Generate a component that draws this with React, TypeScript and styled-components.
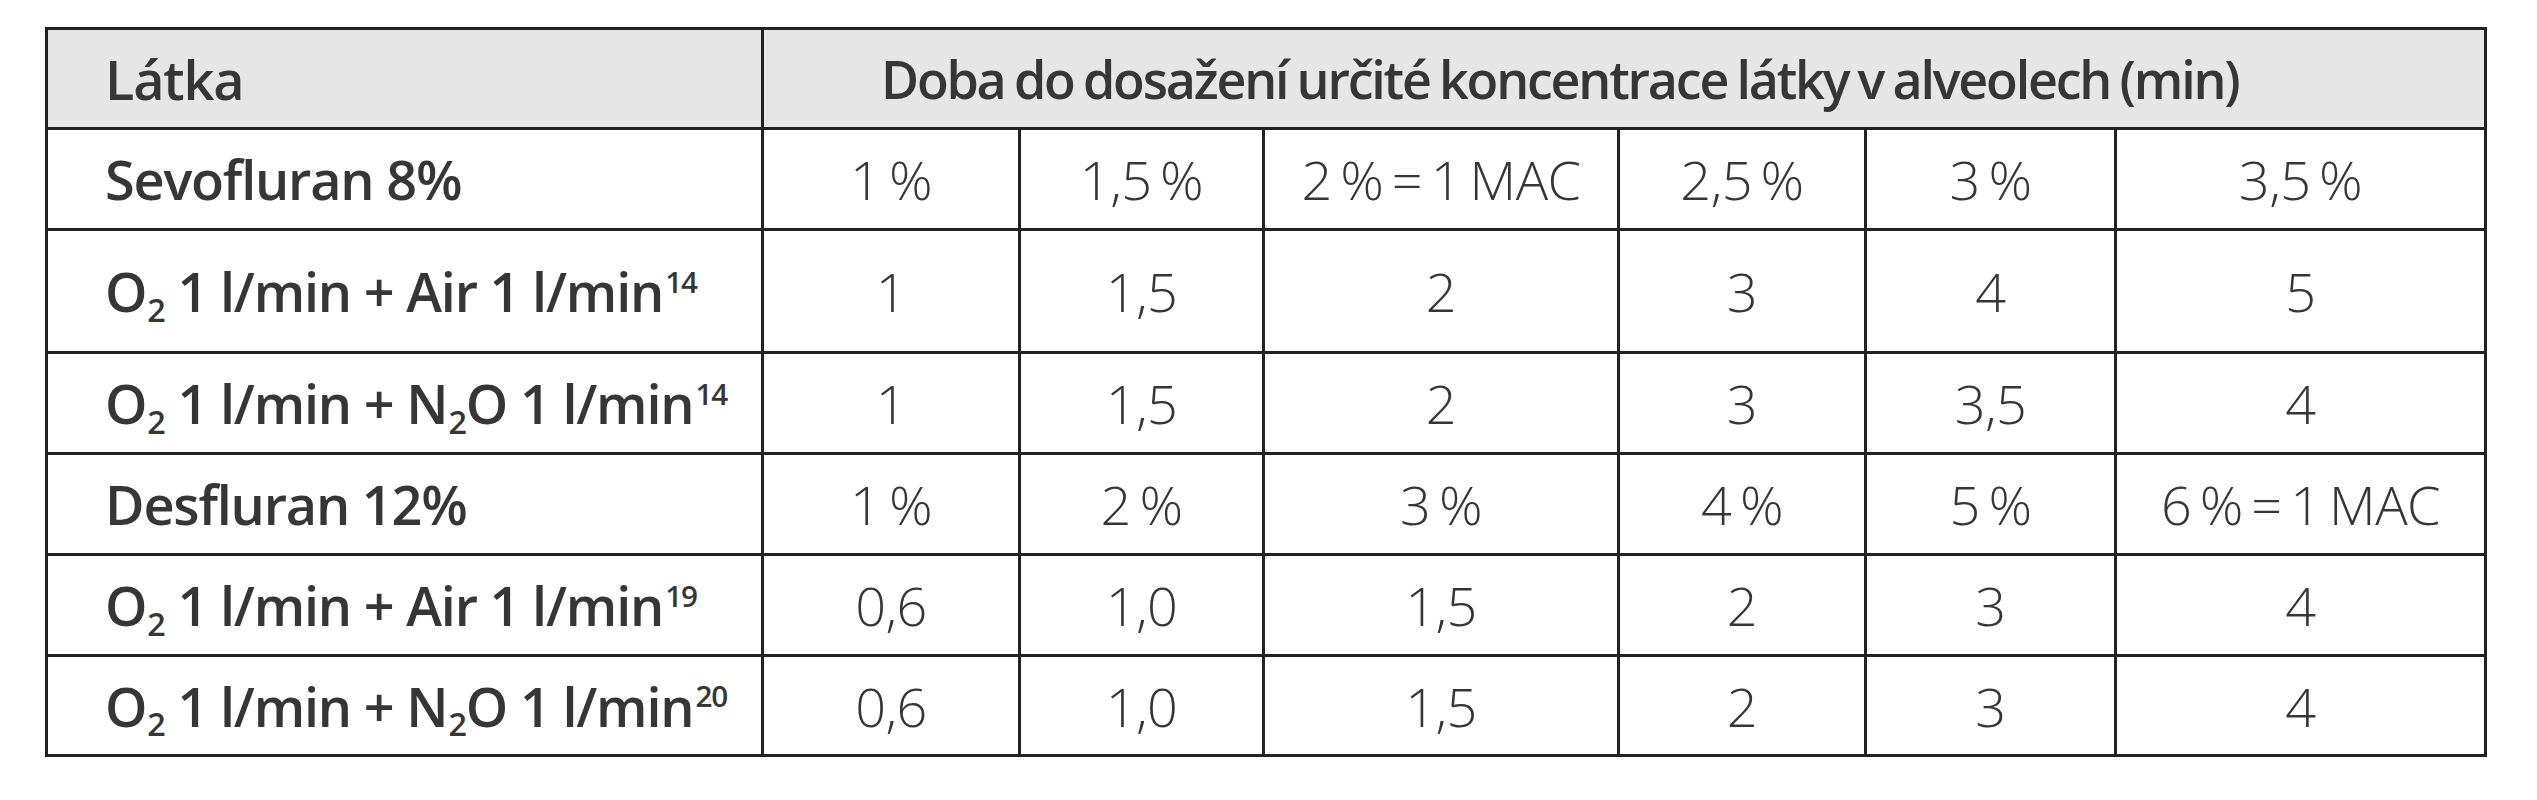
import styled, { createGlobalStyle } from 'styled-components';
import { Fragment, ReactNode } from 'react';

const GlobalStyle = createGlobalStyle`
  body {
    margin: 0;
    background: #fff;
    font-family: "Open Sans", "Noto Sans", sans-serif;
    color: #363636;
  }
`;

const StyledPage = styled.div`
  padding: 27px 0 0 45px;
`;

const StyledTable = styled.div`
  display: grid;
  grid-template-columns: 713px 254px 241px 352px 244px 247px 367px;
  gap: 3px;
  padding: 3px;
  width: max-content;
  background-color: #222;
`;

const StyledCell = styled.div<{ $height: number; $head?: boolean; $span?: number; $label?: boolean }>`
  display: flex;
  align-items: center;
  justify-content: ${(p) => (p.$label ? 'flex-start' : 'center')};
  height: ${(p) => p.$height}px;
  padding: ${(p) => (p.$label ? '0 0 0 57px' : '0')};
  grid-column: span ${(p) => p.$span ?? 1};
  background-color: ${(p) => (p.$head ? '#e6e6e6' : '#fff')};

  font-size: 54px;
  font-weight: ${(p) => (p.$label || p.$head ? 650 : 300)};
  letter-spacing: ${(p) => (p.$label ? '-1.2px' : '-0.5px')};
  word-spacing: ${(p) => (p.$label ? '0' : '-5px')};
  white-space: nowrap;
`;

const StyledHeadTitle = styled(StyledCell)`
  justify-content: flex-start;
  padding-left: 117px;
  font-size: 52px;
  letter-spacing: -2.2px;
  word-spacing: -2px;
`;

const StyledText = styled.span`
  display: inline-block;
`;

const StyledSub = styled.sub`
  font-size: 0.6em;
  line-height: 0;
  vertical-align: -0.3em;
  margin-left: 1px;
`;

const StyledSup = styled.sup`
  font-size: 0.55em;
  line-height: 0;
  vertical-align: 0.65em;
  margin-left: 2px;
`;

interface Row {
  label: ReactNode;
  values: string[];
  height: number;
}

function Oxygen() {
  return <>O<StyledSub>2</StyledSub>{' 1 l/min'}</>;
}

const rows: Row[] = [
  {
    label: 'Sevofluran 8%',
    values: ['1 %', '1,5 %', '2 % = 1 MAC', '2,5 %', '3 %', '3,5 %'],
    height: 98,
  },
  {
    label: <><Oxygen /> + Air 1 l/min<StyledSup>14</StyledSup></>,
    values: ['1', '1,5', '2', '3', '4', '5'],
    height: 120,
  },
  {
    label: <><Oxygen /> + N<StyledSub>2</StyledSub>O 1 l/min<StyledSup>14</StyledSup></>,
    values: ['1', '1,5', '2', '3', '3,5', '4'],
    height: 98,
  },
  {
    label: 'Desfluran 12%',
    values: ['1 %', '2 %', '3 %', '4 %', '5 %', '6 % = 1 MAC'],
    height: 98,
  },
  {
    label: <><Oxygen /> + Air 1 l/min<StyledSup>19</StyledSup></>,
    values: ['0,6', '1,0', '1,5', '2', '3', '4'],
    height: 98,
  },
  {
    label: <><Oxygen /> + N<StyledSub>2</StyledSub>O 1 l/min<StyledSup>20</StyledSup></>,
    values: ['0,6', '1,0', '1,5', '2', '3', '4'],
    height: 97,
  },
];

export default function App() {
  return (
    <>
      <GlobalStyle />
      <StyledPage>
        <StyledTable>
          <StyledCell $height={97} $head $label>
            <StyledText>Látka</StyledText>
          </StyledCell>
          <StyledHeadTitle $height={97} $head $span={6}>
            <StyledText>Doba do dosažení určité koncentrace látky v alveolech (min)</StyledText>
          </StyledHeadTitle>
          {rows.map((row, i) => (
            <Fragment key={i}>
              <StyledCell $height={row.height} $label>
                <StyledText>{row.label}</StyledText>
              </StyledCell>
              {row.values.map((v, j) => (
                <StyledCell key={j} $height={row.height}>
                  <StyledText>{v}</StyledText>
                </StyledCell>
              ))}
            </Fragment>
          ))}
        </StyledTable>
      </StyledPage>
    </>
  );
}
